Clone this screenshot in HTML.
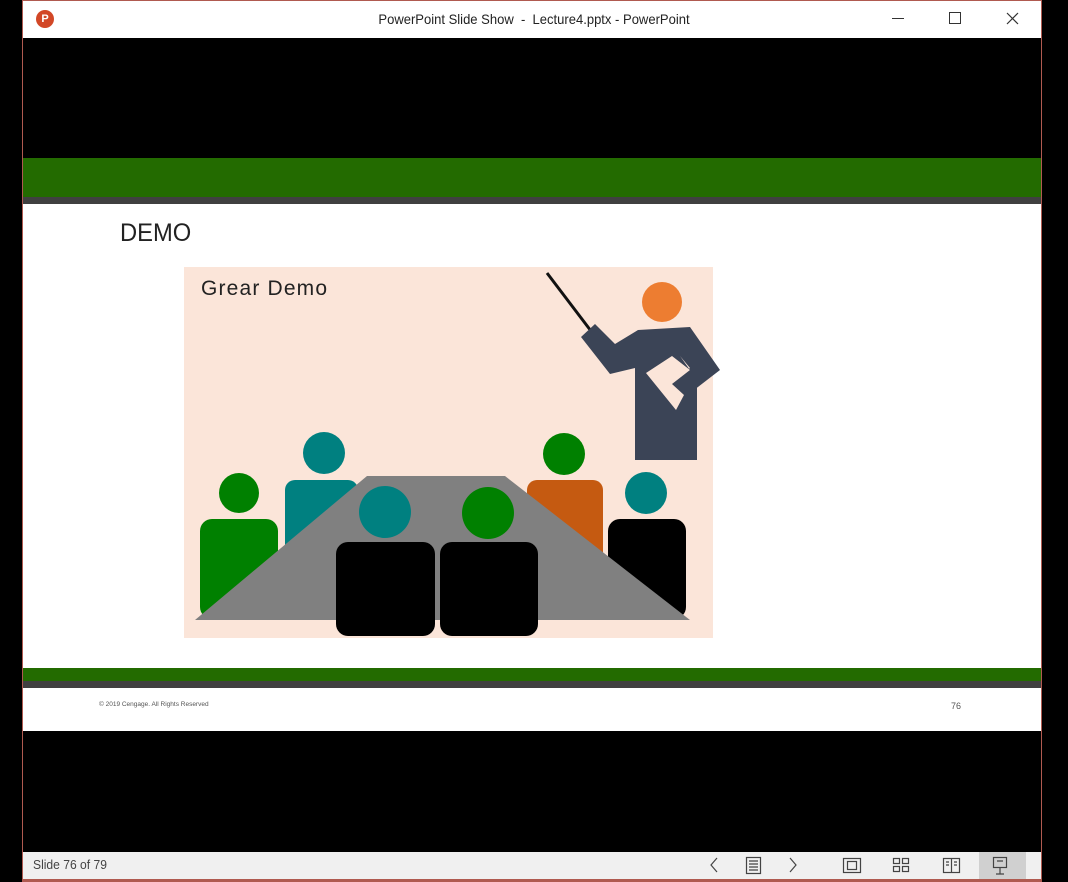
<!DOCTYPE html>
<html><head><style>
*{margin:0;padding:0;box-sizing:border-box}
body{width:1068px;height:882px;background:#000;position:relative;overflow:hidden;font-family:"Liberation Sans",sans-serif}
.a{position:absolute}
</style></head><body>
<div class="a" style="left:22px;top:0;width:1020px;height:882px;background:#000;border-left:1px solid #b05a50;border-right:1px solid #b05a50"></div>
<div class="a" style="left:23px;top:0;width:1018px;height:38px;background:#fff;border-top:1px solid #b05a50"></div>
<div class="a" style="left:36px;top:10px;width:18px;height:18px;border-radius:50%;background:#d24726;color:#fff;font-size:11px;font-weight:bold;text-align:center;line-height:18px">P</div>
<div class="a" style="left:0;width:1068px;top:11px;text-align:center;font-size:14px;color:#222;transform:scaleX(0.93)">PowerPoint Slide Show &nbsp;- &nbsp;Lecture4.pptx - PowerPoint</div>
<div class="a" style="left:892px;top:18px;width:12px;height:1px;background:#333"></div>
<div class="a" style="left:949px;top:12px;width:12px;height:12px;border:1px solid #333"></div>
<svg class="a" style="left:1006px;top:12px" width="13" height="13"><path d="M1 1L12 12M12 1L1 12" stroke="#333" stroke-width="1.2"/></svg>
<div class="a" style="left:23px;top:158px;width:1018px;height:39px;background:#236b00"></div>
<div class="a" style="left:23px;top:197px;width:1018px;height:7px;background:#404040"></div>
<div class="a" style="left:23px;top:204px;width:1018px;height:464px;background:#fff"></div>
<div class="a" style="left:120px;top:219px;font-size:25px;color:#222;transform:scaleX(0.95);transform-origin:left">DEMO</div>
<svg class="a" style="left:0;top:0" width="1068" height="882">
<rect x="184" y="267" width="529" height="371" fill="#fbe5d9"/>
<text x="201" y="295" font-size="21" fill="#222" font-family="Liberation Sans" textLength="126">Grear Demo</text>
<line x1="547" y1="273" x2="591" y2="331" stroke="#111" stroke-width="3"/>
<circle cx="662" cy="302" r="20" fill="#ed7d31"/>
<path d="M581 337 L595 324 L615 344 L638 330 L690 327 L720 370 L685 397 L672 382 L690 368 L680 356 L697 380 L697 460 L635 460 L635 368 L610 374 Z" fill="#3b4456"/>
<path d="M646 373 L672 356 L690 370 L672 384 L684 395 L676 410 Z" fill="#fbe5d9"/>
<rect x="285" y="480" width="73" height="110" rx="10" fill="#008080"/>
<circle cx="324" cy="453" r="21" fill="#008080"/>
<rect x="527" y="480" width="76" height="110" rx="10" fill="#c55a11"/>
<circle cx="564" cy="454" r="21" fill="#008000"/>
<rect x="200" y="519" width="78" height="100" rx="12" fill="#008000"/>
<circle cx="239" cy="493" r="20" fill="#008000"/>
<rect x="608" y="519" width="78" height="100" rx="12" fill="#000"/>
<circle cx="646" cy="493" r="21" fill="#008080"/>
<path d="M367 476 L505 476 L690 620 L195 620 Z" fill="#808080"/>
<circle cx="385" cy="512" r="26" fill="#008080"/>
<circle cx="488" cy="513" r="26" fill="#008000"/>
<rect x="336" y="542" width="99" height="94" rx="12" fill="#000"/>
<rect x="440" y="542" width="98" height="94" rx="12" fill="#000"/>
</svg>
<div class="a" style="left:23px;top:668px;width:1018px;height:13px;background:#236b00"></div>
<div class="a" style="left:23px;top:681px;width:1018px;height:7px;background:#404040"></div>
<div class="a" style="left:23px;top:688px;width:1018px;height:43px;background:#fff"></div>
<div class="a" style="left:99px;top:701px;font-size:6.5px;color:#555">© 2019 Cengage. All Rights Reserved</div>
<div class="a" style="left:951px;top:701px;font-size:9px;color:#555">76</div>
<div class="a" style="left:23px;top:852px;width:1018px;height:27px;background:#f0f0f0"></div>
<div class="a" style="left:23px;top:879px;width:1018px;height:3px;background:#b05a50"></div>
<div class="a" style="left:33px;top:857px;font-size:13px;color:#444;transform:scaleX(0.93);transform-origin:left">Slide 76 of 79</div>
<svg class="a" style="left:0;top:852px" width="1068" height="27">
<g stroke="#444" stroke-width="1.2" fill="none">
<path d="M717 6L711 13L717 20"/>
<rect x="746.5" y="5.5" width="14" height="16"/><path d="M749 9H758M749 12H758M749 15H758M749 18H758"/>
<path d="M790 6L796 13L790 20"/>
<rect x="843.5" y="6.5" width="17" height="14"/><rect x="847.5" y="9.5" width="9" height="8"/>
<rect x="893.5" y="6.5" width="6" height="5"/><rect x="902.5" y="6.5" width="6" height="5"/><rect x="893.5" y="14.5" width="6" height="5"/><rect x="902.5" y="14.5" width="6" height="5"/>
</g></svg>
<svg class="a" style="left:0;top:852px" width="1068" height="27"><g stroke="#444" stroke-width="1.2" fill="none">
<rect x="943.5" y="6.5" width="16" height="14"/><path d="M951.5 6.5V20.5M946 10H949M946 13H949M954 10H957M954 13H957"/>
</g></svg>
<div class="a" style="left:979px;top:852px;width:47px;height:27px;background:#d0d0d0"></div>
<svg class="a" style="left:979px;top:852px" width="47" height="27"><g stroke="#444" stroke-width="1.2" fill="none"><rect x="14.5" y="5.5" width="13" height="10"/><path d="M21 15.5V22M17 22H25M18 9H24"/></g></svg>
</body></html>
